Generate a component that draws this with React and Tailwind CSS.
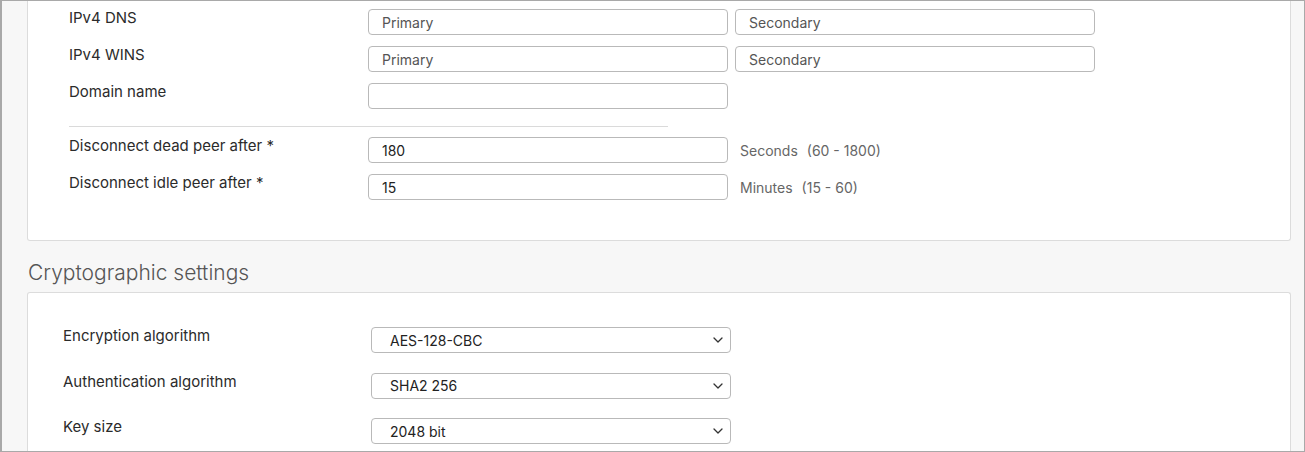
import React from 'react';

const labelCls = "w-[299px] shrink-0 text-[15px] leading-[20px] text-[#2b2b2b]";
const inputCls = "h-[26px] w-[360px] rounded-[4px] border border-[#b9b9b9] bg-white px-[13px] text-[14px] text-[#222] placeholder:text-[#555] outline-none";

function Field({ placeholder, value }) {
    return (
        <input
            className={inputCls}
            placeholder={placeholder}
            defaultValue={value}
            readOnly
        />
    );
}

function Row({ label, children }) {
    return (
        <div className="flex items-start h-[27px]">
            <div className={labelCls}>{label}</div>
            <div className="mt-px flex items-center gap-[7px]">{children}</div>
        </div>
    );
}

function Unit({ unit, range }) {
    return (
        <div className="ml-[5px] flex items-center gap-[9px] text-[14px] text-[#666]">
            <span>{unit}</span>
            <span>{range}</span>
        </div>
    );
}

function Select({ value }) {
    return (
        <div className="mt-[3px] flex h-[26px] w-[360px] items-center justify-between rounded-[4px] border border-[#b9b9b9] bg-white pl-[18px] pr-[7px] text-[14px] text-[#222]">
            <span>{value}</span>
            <svg width="10" height="6" viewBox="0 0 10 6" fill="none">
                <path d="M1 1 L5 5 L9 1" stroke="#333" strokeWidth="1.3" strokeLinecap="round" strokeLinejoin="round" />
            </svg>
        </div>
    );
}

export default function App() {
    const crypto = [
        { label: 'Encryption algorithm', value: 'AES-128-CBC' },
        { label: 'Authentication algorithm', value: 'SHA2 256' },
        { label: 'Key size', value: '2048 bit' },
    ];

    return (
        <div className="h-[452px] w-[1305px] overflow-hidden border-y border-r border-l-2 border-[#a9a9a9] bg-[#f7f7f7] pl-[25px] pr-[13px] font-['Inter','Liberation_Sans',sans-serif]">
            {/* Tunnel settings card (top cut off) */}
            <div className="rounded-b-[3px] border-x border-b border-[#dcdcdc] bg-white pl-[41px] pt-[7px] pb-[40px]">
                <div className="flex flex-col gap-[10px]">
                    <Row label="IPv4 DNS">
                        <Field placeholder="Primary" />
                        <Field placeholder="Secondary" />
                    </Row>
                    <Row label="IPv4 WINS">
                        <Field placeholder="Primary" />
                        <Field placeholder="Secondary" />
                    </Row>
                    <Row label="Domain name">
                        <Field />
                    </Row>
                </div>

                <div className="mt-[17px] h-px w-[599px] bg-[#dadada]"></div>

                <div className="mt-[9px] flex flex-col gap-[10px]">
                    <Row label="Disconnect dead peer after *">
                        <Field value="180" />
                        <Unit unit="Seconds" range="(60 - 1800)" />
                    </Row>
                    <Row label="Disconnect idle peer after *">
                        <Field value="15" />
                        <Unit unit="Minutes" range="(15 - 60)" />
                    </Row>
                </div>
            </div>

            {/* Cryptographic settings */}
            <div className="ml-px pt-[18px] mb-[5px] text-[21px] leading-[28px] font-light text-[#555]">
                Cryptographic settings
            </div>

            <div className="rounded-t-[3px] border-x border-t border-[#dcdcdc] bg-white pl-[35px] pt-[31px] pb-[20px]">
                <div className="flex flex-col gap-[16.5px]">
                    {crypto.map(c => (
                        <div key={c.label} className="flex items-start">
                            <div className="mt-[2px] w-[308px] shrink-0 text-[15px] leading-[20px] text-[#2b2b2b]">{c.label}</div>
                            <Select value={c.value} />
                        </div>
                    ))}
                </div>
            </div>
        </div>
    );
}
